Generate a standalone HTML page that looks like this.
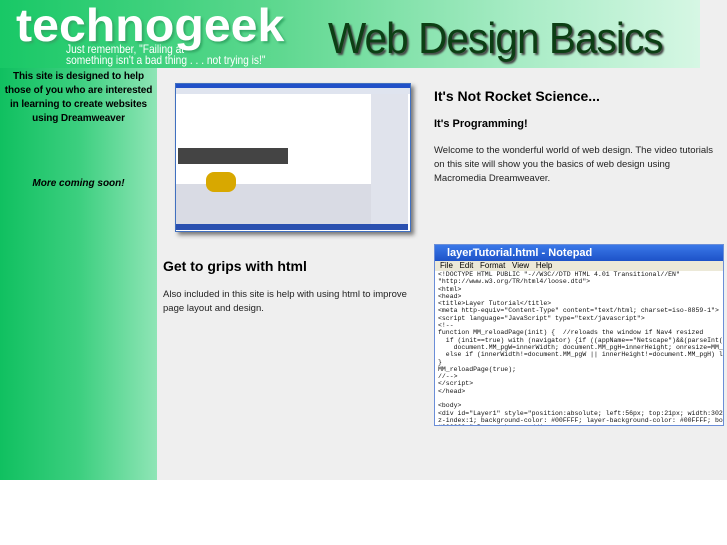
<!DOCTYPE html><html><head><style>
body{margin:0;width:727px;height:545px;background:#fff;font-family:"Liberation Sans",Arial,sans-serif;position:relative;overflow:hidden}
.hdr{position:absolute;left:0;top:0;width:700px;height:68px;background:linear-gradient(90deg,#18c866 0%,#5fd890 40%,#a9ecc6 75%,#d6f7e4 100%);overflow:hidden}
.side{position:absolute;left:0;top:68px;width:157px;height:412px;background:linear-gradient(90deg,#10c060 0%,#3ccf7f 50%,#8fe5b6 100%)}
.main{position:absolute;left:157px;top:68px;width:570px;height:412px;background:#efefef}
.rt{position:absolute;left:700px;top:0;width:27px;height:68px;background:#efefef}
.st{position:absolute;font-weight:bold;color:#000}
</style></head><body>
<div class="hdr">
<div style="position:absolute;left:16px;top:-2px;font-size:46px;font-weight:bold;color:#fff;text-shadow:2px 2px 2px #3a6;transform:scaleX(1.05);transform-origin:left">technogeek</div>
<div style="position:absolute;left:66px;top:44px;font-size:12px;color:#fff;line-height:11px;transform:scaleX(0.85);transform-origin:left;white-space:nowrap">Just remember, "Failing at<br>something isn't a bad thing . . . not trying is!"</div>
<div style="position:absolute;left:328px;top:14px;font-size:44px;color:#0c3f14;text-shadow:2px 2px 2px #444;transform:scaleX(0.92);transform-origin:left;white-space:nowrap;letter-spacing:-1px">Web Design Basics</div>
</div>
<div class="rt"></div>
<div class="side">
<div style="position:absolute;left:0;top:2px;width:157px;text-align:center;font-size:10px;font-weight:bold;line-height:14px;letter-spacing:-0.1px">This site is designed to help those of you who are interested in learning to create websites using Dreamweaver</div>
<div style="position:absolute;left:0;top:110px;width:157px;text-align:center;font-size:10px;font-weight:bold;font-style:italic">More coming soon!</div>
</div>
<div class="main"></div>
<div style="position:absolute;left:178px;top:86px;width:236px;height:149px;background:#777;filter:blur(2px)"></div>
<div style="position:absolute;left:175px;top:83px;width:234px;height:147px;background:#fff;border:1px solid #4070c0">
<div style="height:4px;background:#2050c8"></div>
<div style="height:6px;background:#dfe4ef"></div>
<div style="position:absolute;left:0;top:100px;width:232px;height:45px;background:#d9dbe4"></div>
<div style="position:absolute;left:2px;top:64px;width:110px;height:16px;background:#444"></div>
<div style="position:absolute;left:30px;top:88px;width:30px;height:20px;background:#d8a800;border-radius:8px"></div>
<div style="position:absolute;left:195px;top:10px;width:37px;height:130px;background:#e0e3ec"></div>
<div style="position:absolute;left:0;top:140px;width:232px;height:6px;background:#2a50b0"></div>
</div>
<div class="st" style="left:434px;top:88px;font-size:14px">It's Not Rocket Science...</div>
<div class="st" style="left:434px;top:118px;font-size:11px">It's Programming!</div>
<div style="position:absolute;left:434px;top:144px;width:290px;font-size:9.5px;line-height:14px;color:#222">Welcome to the wonderful world of web design. The video tutorials on this site will show you the basics of web design using Macromedia Dreamweaver.</div>
<div class="st" style="left:163px;top:258px;font-size:14px">Get to grips with html</div>
<div style="position:absolute;left:163px;top:288px;width:260px;font-size:9.5px;line-height:14px;color:#222">Also included in this site is help with using html to improve page layout and design.</div>
<div style="position:absolute;left:434px;top:244px;width:288px;height:180px;background:#fff;border:1px solid #6b8ed8;overflow:hidden">
<div style="height:16px;background:linear-gradient(#3a78e8,#1d52c8);color:#fff;font-size:11px;font-weight:bold;line-height:16px;padding-left:12px">layerTutorial.html - Notepad</div>
<div style="height:10px;background:#ece9d8;font-size:8px;line-height:10px;padding-left:5px">File&nbsp;&nbsp; Edit&nbsp;&nbsp; Format&nbsp;&nbsp; View&nbsp;&nbsp; Help</div>
<div style="font-family:'Liberation Mono',monospace;font-size:6.5px;line-height:7.3px;padding-left:3px;white-space:pre;color:#111">&lt;!DOCTYPE HTML PUBLIC "-//W3C//DTD HTML 4.01 Transitional//EN"
"http://www.w3.org/TR/html4/loose.dtd"&gt;
&lt;html&gt;
&lt;head&gt;
&lt;title&gt;Layer Tutorial&lt;/title&gt;
&lt;meta http-equiv="Content-Type" content="text/html; charset=iso-8859-1"&gt;
&lt;script language="JavaScript" type="text/javascript"&gt;
&lt;!--
function MM_reloadPage(init) {  //reloads the window if Nav4 resized
  if (init==true) with (navigator) {if ((appName=="Netscape")&amp;&amp;(parseInt(a
    document.MM_pgW=innerWidth; document.MM_pgH=innerHeight; onresize=MM_r
  else if (innerWidth!=document.MM_pgW || innerHeight!=document.MM_pgH) lo
}
MM_reloadPage(true);
//--&gt;
&lt;/script&gt;
&lt;/head&gt;

&lt;body&gt;
&lt;div id="Layer1" style="position:absolute; left:56px; top:21px; width:302p
z-index:1; background-color: #00FFFF; layer-background-color: #00FFFF; bord
#000000;"&gt;Banner Layer &lt;/div&gt;
&lt;div id="Layer2" style="position:absolute; left:55px; top:165px; width:220
z-index:2; background-color: #9966FF; layer-background-color: #9966FF; bor</div>
</div>
</body></html>
